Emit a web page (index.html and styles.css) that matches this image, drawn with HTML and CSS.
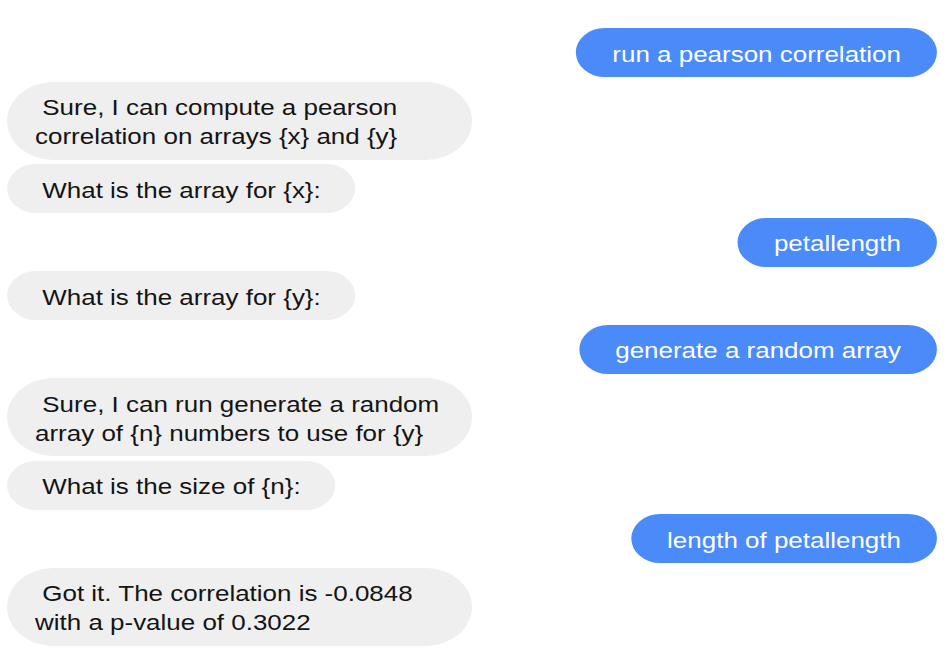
FILE: index.html
```html
<!DOCTYPE html>
<html lang="en">
<head>
<meta charset="utf-8">
<title>Chat</title>
<link rel="stylesheet" href="styles.css">
</head>
<body>
<div class="chat">
  <div class="msg user">run a pearson correlation</div>
  <div class="msg bot wide">Sure, I can compute a pearson<br>correlation on arrays {x} and {y}</div>
  <div class="msg bot">What is the array for {x}:</div>
  <div class="msg user">petallength</div>
  <div class="msg bot">What is the array for {y}:</div>
  <div class="msg user">generate a random array</div>
  <div class="msg bot wide">Sure, I can run generate a random<br>array of {n} numbers to use for {y}</div>
  <div class="msg bot">What is the size of {n}:</div>
  <div class="msg user">length of petallength</div>
  <div class="msg bot wide">Got it. The correlation is -0.0848<br>with a p-value of 0.3022</div>
</div>
</body>
</html>
```
FILE: styles.css
```css
html, body {
  margin: 0;
  padding: 0;
  background: #ffffff;
}

body {
  width: 944px;
  height: 654px;
  overflow: hidden;
}

.chat {
  width: 800px;
  box-sizing: border-box;
  padding: 28px 6px 0 6px;
  display: flex;
  flex-direction: column;
  align-items: flex-start;
  gap: 4.5px;
  transform: scaleX(1.18);
  transform-origin: 0 0;
  font-family: "Liberation Sans", Arial, Helvetica, sans-serif;
  font-size: 22px;
  line-height: 29px;
}

.msg {
  border-radius: 26px;
  white-space: nowrap;
}

.bot {
  background: #efefef;
  color: #141414;
  padding: 11.5px 29.5px 8.5px 23.7px;
  text-indent: 0.28em;
}

.bot.wide {
  width: 394px;
  box-sizing: border-box;
  border-radius: 40px;
}

.user {
  align-self: flex-end;
  background: #4a8bf9;
  color: #ffffff;
  padding: 11.5px 30.5px 8.5px 30.5px;
}
```
